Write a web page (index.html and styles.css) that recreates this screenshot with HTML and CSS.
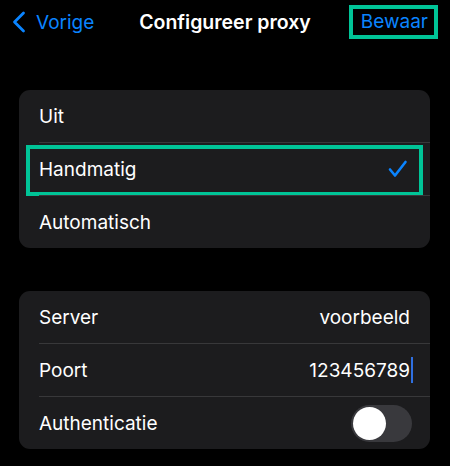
FILE: index.html
```html
<!DOCTYPE html>
<html lang="nl">
  <head>
    <meta charset="UTF-8" />
    <title>Configureer proxy</title>
    <link rel="stylesheet" href="styles.css">
  </head>
  <body>
    <header class="topbar">
      <a class="back" href="#">
        <svg class="chevron" width="14" height="22" viewBox="0 0 14 22">
          <path d="M11.5 2 L2.5 11 L11.5 20" fill="none" stroke="#0a84ff" stroke-width="2.8" stroke-linecap="round" stroke-linejoin="round" />
        </svg>
        Vorige
      </a>
      <h1 class="title">Configureer proxy</h1>
      <div class="save-wrap">
        <button class="save mark" type="button">Bewaar</button>
      </div>
    </header>

    <section class="group">
      <div class="row">Uit</div>
      <div class="row selected">
        <span>Handmatig</span>
        <svg class="check" width="20" height="18" viewBox="0 0 20 18">
          <path d="M2 9.5 L7 15.5 L17.5 2" fill="none" stroke="#0a84ff" stroke-width="2.6" stroke-linecap="round" stroke-linejoin="round" />
        </svg>
        <div class="highlight"></div>
      </div>
      <div class="row">Automatisch</div>
    </section>

    <section class="group">
      <div class="row">
        <span>Server</span>
        <span class="value">voorbeeld</span>
      </div>
      <div class="row">
        <span>Poort</span>
        <span class="value">123456789<span class="caret"></span></span>
      </div>
      <div class="row">
        <span>Authenticatie</span>
        <span class="switch"><span class="knob"></span></span>
      </div>
    </section>
  </body>
</html>
```

FILE: styles.css
```css
body {
  margin: 0;
  background-color: #000;
  color: #fff;
  font-family: Inter, "Noto Sans", sans-serif;
  font-size: 19px;
}
.topbar {
  display: grid;
  grid-template-columns: 1fr auto 1fr;
  align-items: center;
  height: 44px;
  padding: 0 12px;
}
.back {
  display: flex;
  align-items: center;
  gap: 10px;
  color: #0a84ff;
  text-decoration: none;
  font-size: 19px;
}
.title {
  margin: 0;
  font-size: 19.5px;
  font-weight: 600;
}
.save-wrap {
  display: flex;
  justify-content: flex-end;
}
.save {
  background: transparent;
  border: none;
  color: #0a84ff;
  font-family: inherit;
  font-size: 19px;
  height: 34px;
  padding: 0 6px 0 8px;
  margin-top: -1px;
}
.mark {
  border: 4px solid #00c497;
}
.group {
  margin: 46px 20px 0 19px;
  background-color: #1c1c1e;
  border-radius: 11px;
}
.group + .group {
  margin-top: 43px;
}
.row {
  position: relative;
  display: flex;
  align-items: center;
  justify-content: space-between;
  height: 52px;
  padding: 0 20px;
}
.row + .row {
  border-top: 1px solid transparent;
}
.row + .row::before {
  content: "";
  position: absolute;
  top: -1px;
  left: 20px;
  right: 0;
  height: 1px;
  background-color: #38383a;
}
.check {
  margin-right: 2px;
}
.highlight {
  position: absolute;
  top: 2px;
  left: 7px;
  right: 7px;
  height: 51px;
  border: 4px solid #00c497;
  box-sizing: border-box;
}
.value {
  display: flex;
  align-items: center;
}
.caret {
  display: inline-block;
  width: 2px;
  height: 26px;
  margin-left: 1px;
  margin-right: -3px;
  background-color: #2f6fe0;
}
.switch {
  position: relative;
  width: 61px;
  height: 37px;
  border-radius: 19px;
  background-color: #39393d;
  margin-right: -2px;
}
.knob {
  position: absolute;
  top: 2px;
  left: 2px;
  width: 33px;
  height: 33px;
  border-radius: 50%;
  background-color: #fff;
}
```
